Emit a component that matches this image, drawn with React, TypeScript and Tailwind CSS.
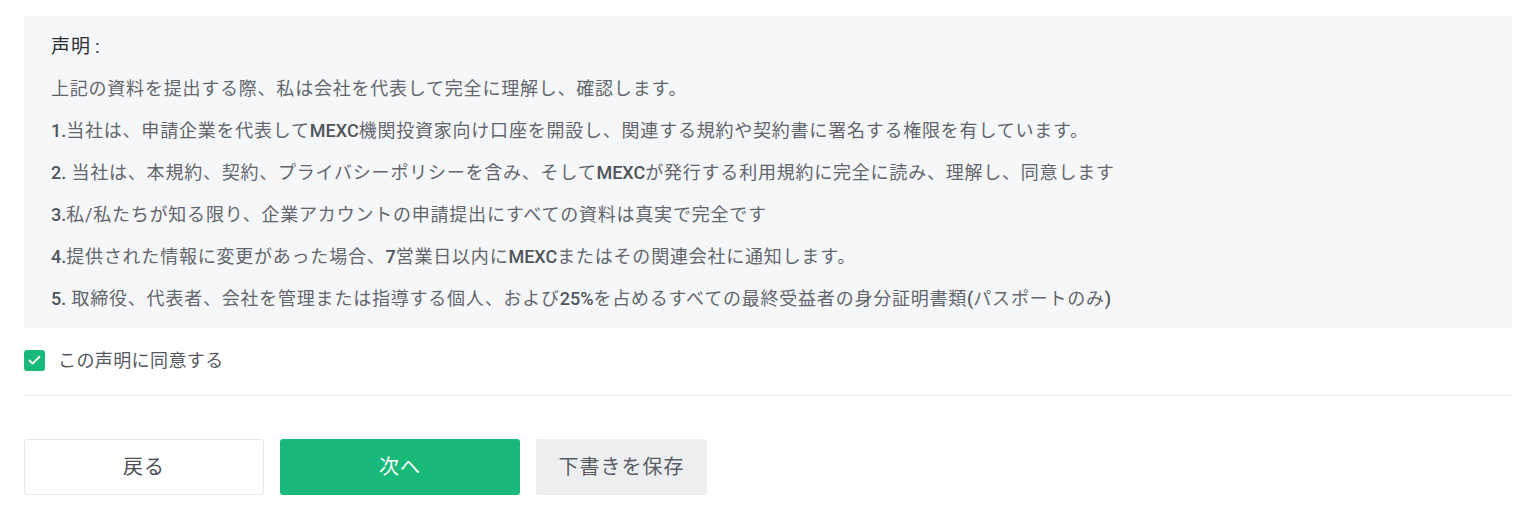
import { Check } from "lucide-react";

const L = ({ children }: { children: React.ReactNode }) => (
  <span className="font-medium tracking-normal text-[#50555b]">{children}</span>
);

export default function App() {
  return (
    <div
      className="min-h-[523px] bg-white px-4 pt-4 pl-6 pr-4"
      style={{ fontFamily: '"Roboto", "Noto Sans CJK JP", sans-serif' }}
    >
      {/* Statement */}
      <div className="flex flex-col gap-4 rounded bg-[#f6f7f9] pt-[18px] pb-4 pl-[27px] pr-6 text-[18px] leading-[26px] tracking-[0.78px] text-[#62666c]">
        <p className="text-[19px] tracking-[1px] text-[#2b2f33]">
          声明<span className="ml-[4px]">:</span>
        </p>
        <p>上記の資料を提出する際、私は会社を代表して完全に理解し、確認します。</p>
        <p>
          <L>1.</L>当社は、申請企業を代表して<L>MEXC</L>機関投資家向け口座を開設し、関連する規約や契約書に署名する権限を有しています。
        </p>
        <p>
          <L>2.</L> 当社は、本規約、契約、プライバシーポリシーを含み、そして<L>MEXC</L>が発行する利用規約に完全に読み、理解し、同意します
        </p>
        <p>
          <L>3.</L>私/私たちが知る限り、企業アカウントの申請提出にすべての資料は真実で完全です
        </p>
        <p>
          <L>4.</L>提供された情報に変更があった場合、<L>7</L>営業日以内に<L>MEXC</L>またはその関連会社に通知します。
        </p>
        <p>
          <L>5.</L> 取締役、代表者、会社を管理または指導する個人、および<L>25%</L>を占めるすべての最終受益者の身分証明書類<L>(</L>パスポートのみ<L>)</L>
        </p>
      </div>

      {/* Agree */}
      <label className="mt-[22px] flex items-center gap-[13px] text-[18px] leading-[20px] tracking-[0.4px] text-[#55595f]">
        <span className="flex h-[21px] w-[21px] items-center justify-center rounded-[3px] bg-[#18b979]">
          <Check size={15} strokeWidth={3} className="text-white" />
        </span>
        この声明に同意する
      </label>

      <div className="mt-[24px] h-px bg-[#e9eaec]" />

      {/* Actions */}
      <div className="mt-[43px] flex gap-4 text-[20px] tracking-[1px]">
        <button className="h-[56px] w-[240px] rounded-[3px] border border-[#e6e7e9] bg-white text-[#4a4e54]">
          戻る
        </button>
        <button className="h-[56px] w-[240px] rounded-[3px] bg-[#18b979] text-white">次へ</button>
        <button className="h-[56px] w-[171px] rounded-[3px] bg-[#edeef0] text-[#5a5e64]">
          下書きを保存
        </button>
      </div>
    </div>
  );
}
